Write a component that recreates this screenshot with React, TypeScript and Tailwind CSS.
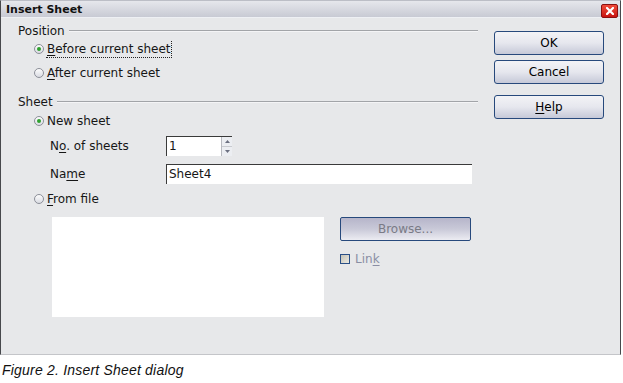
import React from 'react'

const U = ({ children }: { children: React.ReactNode }) => <span className="underline underline-offset-2">{children}</span>

const Radio = ({ checked }: { checked?: boolean }) => (
  <span className="flex h-[10px] w-[10px] shrink-0 items-center justify-center rounded-full border border-[#8c8f99] bg-gradient-to-b from-[#fdfdfd] to-[#d9dbe2]">
    {checked && <span className="h-[4px] w-[4px] rounded-full bg-[#2fa12f]" />}
  </span>
)

const GroupHeader = ({ label }: { label: string }) => (
  <div className="flex h-[14px] items-center pl-[17px]">
    <span className="leading-none">{label}</span>
    <div className="ml-[4px] flex flex-1 flex-col">
      <div className="h-px bg-[#a2a4a8]" />
      <div className="h-px bg-[#f4f4f6]" />
    </div>
  </div>
)

const DlgButton = ({ children, className = '' }: { children: React.ReactNode; className?: string }) => (
  <div
    className={`flex h-[24px] w-[110px] items-center justify-center rounded-[3px] border border-[#27497c] bg-gradient-to-b from-[#f3f3f6] via-[#e6e7ee] to-[#c6c9d8] text-[12px] text-black ${className}`}
  >
    {children}
  </div>
)

export default function App() {
  return (
    <div className="relative h-[383px] w-[623px] bg-white font-['DejaVu_Sans',sans-serif] text-[12px] text-[#161616]">
      <div className="flex h-[355px] w-[621px] flex-col border border-[#47484c] border-t-[#bcbec6] border-b-[#c4c5c9] bg-[#e7e8ea]">
        {/* title bar */}
        <div className="flex h-[17px] items-center justify-between border-b border-[#eef0f4] bg-gradient-to-b from-[#e6e7ec] to-[#c8cad4] pl-[5px] pr-[2px]">
          <span className="text-[11px] font-bold leading-none text-[#111]">Insert Sheet</span>
          <span className="mt-[3px] flex h-[14px] w-[17px] items-center justify-center rounded-[2px] border border-[#8a1010] bg-gradient-to-b from-[#f04a3a] to-[#c81010]">
            <svg width="8" height="8" viewBox="0 0 8 8">
              <path d="M1 1 L7 7 M7 1 L1 7" stroke="white" strokeWidth="2.2" strokeLinecap="square" />
            </svg>
          </span>
        </div>

        {/* body */}
        <div className="flex flex-1">
          <div className="flex w-[477px] flex-col pt-[6px]">
            <GroupHeader label="Position" />
            <div className="mt-[2px] flex h-[18px] items-center gap-[2px] pl-[33px]">
              <Radio checked />
              <span className="border-r border-b border-dotted border-[#222] pr-[1px] pl-[1px] leading-[16px]">
                <U>B</U>efore current sheet
              </span>
            </div>
            <div className="mt-[6px] flex h-[18px] items-center gap-[3px] pl-[33px]">
              <Radio />
              <span>
                <U>A</U>fter current sheet
              </span>
            </div>

            <div className="mt-[13px]">
              <GroupHeader label="Sheet" />
            </div>
            <div className="mt-[3px] flex h-[18px] items-center gap-[3px] pl-[33px]">
              <Radio checked />
              <span>New sheet</span>
            </div>
            <div className="mt-[6px] flex h-[20px] items-center pl-[49px]">
              <span className="w-[116px]">
                N<U>o</U>. of sheets
              </span>
              <div className="flex h-[20px] w-[66px] border-t border-l border-[#3a3a3a] bg-white">
                <span className="flex-1 pl-[2px] leading-[18px]">1</span>
                <div className="flex w-[11px] flex-col border-l border-[#b8bac0] bg-[#eceef2]">
                  <div className="flex flex-1 items-center justify-center border-b border-[#c8cacf]">
                    <svg width="5" height="3" viewBox="0 0 5 3">
                      <path d="M0 3 L2.5 0 L5 3 Z" fill="#6b7080" />
                    </svg>
                  </div>
                  <div className="flex flex-1 items-center justify-center">
                    <svg width="5" height="3" viewBox="0 0 5 3">
                      <path d="M0 0 L2.5 3 L5 0 Z" fill="#6b7080" />
                    </svg>
                  </div>
                </div>
              </div>
            </div>
            <div className="mt-[8px] flex h-[20px] items-center pl-[49px]">
              <span className="w-[116px]">
                Na<U>m</U>e
              </span>
              <div className="h-[20px] w-[306px] border-t border-l border-[#3a3a3a] bg-white pl-[2px] leading-[18px]">Sheet4</div>
            </div>
            <div className="mt-[6px] flex h-[18px] items-center gap-[3px] pl-[33px]">
              <Radio />
              <span>
                <U>F</U>rom file
              </span>
            </div>
            <div className="mt-[9px] flex pl-[51px]">
              <div className="h-[100px] w-[272px] bg-white" />
              <div className="ml-[16px] flex flex-col">
                <div className="flex h-[24px] w-[131px] items-center justify-center rounded-[2px] border border-[#27497c] bg-gradient-to-b from-[#b6b5ca] via-[#c9c9d8] to-[#ececf2] text-[#7a7b86]">
                  Browse...
                </div>
                <div className="mt-[9px] flex items-center gap-[5px]">
                  <span className="h-[10px] w-[10px] border border-[#2a4f86] bg-gradient-to-br from-[#c4c2b6] to-[#eceae2]" />
                  <span className="text-[#8a8ea4]">
                    Lin<U>k</U>
                  </span>
                </div>
              </div>
            </div>
          </div>

          <div className="ml-[16px] flex flex-col pt-[13px]">
            <DlgButton>OK</DlgButton>
            <DlgButton className="mt-[5px]">Cancel</DlgButton>
            <DlgButton className="mt-[11px]">
              <span>
                <U>H</U>elp
              </span>
            </DlgButton>
          </div>
        </div>
      </div>

      <div className="pl-[2px] pt-[5px] font-['Liberation_Sans',Arial,sans-serif] text-[14px] italic tracking-[0.2px] text-[#111]">
        Figure 2. Insert Sheet dialog
      </div>
    </div>
  )
}
